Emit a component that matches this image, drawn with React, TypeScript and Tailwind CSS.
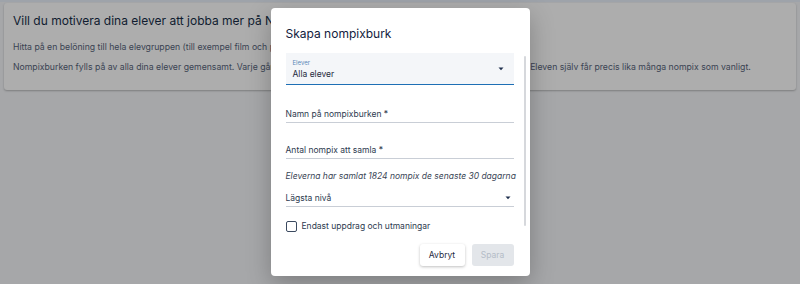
import { useState } from "react";

function Caret() {
  return (
    <svg width="8" height="8" viewBox="0 0 8 8" aria-hidden>
      <path d="M1.5 2.5h5L4 5.2z" fill="#1e2f4d" />
    </svg>
  );
}

function LineField({ label, select }: { label: string; select?: boolean }) {
  return (
    <div className="flex h-[17px] items-center justify-between border-b border-[#c9ced6] pr-[2px] text-[8.5px] text-[#2d3a4f]">
      <span>{label}</span>
      {select && <Caret />}
    </div>
  );
}

export default function App() {
  const [onlyTasks, setOnlyTasks] = useState(false);

  return (
    <div
      className="relative h-[284px] w-[800px] overflow-hidden bg-[#a6a7a9]"
      style={{ fontFamily: "Inter, 'Noto Sans', sans-serif" }}
    >
      <div className="h-[2px] bg-[#9ea3aa]" />
      <div className="px-[4px] pt-[1px]">
        <div className="h-[87px] rounded-[3px] bg-[#adadad] px-[9px] pt-[9px] shadow-[0_1px_2px_rgba(0,0,0,0.25)]">
          <h2 className="text-[12px] leading-[18px] text-[#101c30]">
            Vill du motivera dina elever att jobba mer på Nompix?
          </h2>
          <p className="mt-[11px] whitespace-nowrap text-[8.7px] leading-[12px] text-[#3a4352]">
            Hitta på en belöning till hela elevgruppen (till exempel film och popcorn) som ni gör när burken är full.
          </p>
          <p className="mt-[8px] whitespace-nowrap text-[8.7px] leading-[12px] text-[#3a4352]">
            Nompixburken fylls på av alla dina elever gemensamt. Varje gång en elev samlar nompix fylls burken med lika många nompix. Eleven själv får precis lika många nompix som vanligt.
          </p>
        </div>
      </div>

      <div className="absolute inset-0 flex items-center justify-center">
        <div className="flex h-[268px] w-[259px] flex-col rounded-[4px] bg-white pb-[10px] shadow-[0_8px_24px_rgba(0,0,0,0.25)]">
          <h1 className="px-[15px] pt-[18px] text-[12px] leading-[16px] text-[#12213d]">Skapa nompixburk</h1>

          <div className="flex flex-1 pl-[15px] pr-[3px] pt-[11px]">
            <div className="w-[228px]">
              <div className="flex h-[32px] items-center justify-between border-b-[1.5px] border-[#1e6fb5] bg-[#f4f6f9] pl-[7px] pr-[9px]">
                <div className="flex flex-col pt-[1px]">
                  <span className="text-[6px] leading-[8px] text-[#5b87b8]">Elever</span>
                  <span className="mt-[1px] text-[8.5px] leading-[12px] text-[#1e2a3d]">Alla elever</span>
                </div>
                <Caret />
              </div>

              <div className="mt-[21px]">
                <LineField label="Namn på nompixburken *" />
              </div>
              <div className="mt-[19px]">
                <LineField label="Antal nompix att samla *" />
              </div>
              <p className="mt-[11px] whitespace-nowrap text-[8.5px] italic leading-[12px] text-[#3a4656]">
                Eleverna har samlat 1824 nompix de senaste 30 dagarna
              </p>
              <div className="mt-[8px]">
                <LineField label="Lägsta nivå" select />
              </div>

              <label className="mt-[13px] flex h-[12px] items-center gap-[5px] text-[8.5px] text-[#2d3a4f]">
                <button
                  type="button"
                  onClick={() => setOnlyTasks(!onlyTasks)}
                  className="h-[11px] w-[11px] rounded-[2px] border-[1.5px] border-[#3b4a60] bg-white"
                />
                Endast uppdrag och utmaningar
              </label>

              <div className="mt-[12px] flex justify-end gap-[7px]">
                <button className="h-[22px] w-[45px] rounded-[3px] bg-white text-[8.5px] text-[#1f2c42] shadow-[0_1px_3px_rgba(0,0,0,0.25)]">
                  Avbryt
                </button>
                <button className="h-[22px] w-[42px] rounded-[3px] bg-[#e3e6ea] text-[8.5px] text-[#b4bcc7]">
                  Spara
                </button>
              </div>
            </div>
            <div className="ml-[10px] mt-[3px] h-[170px] w-[2px] rounded-full bg-[#d6d8dc]" />
          </div>
        </div>
      </div>
    </div>
  );
}
